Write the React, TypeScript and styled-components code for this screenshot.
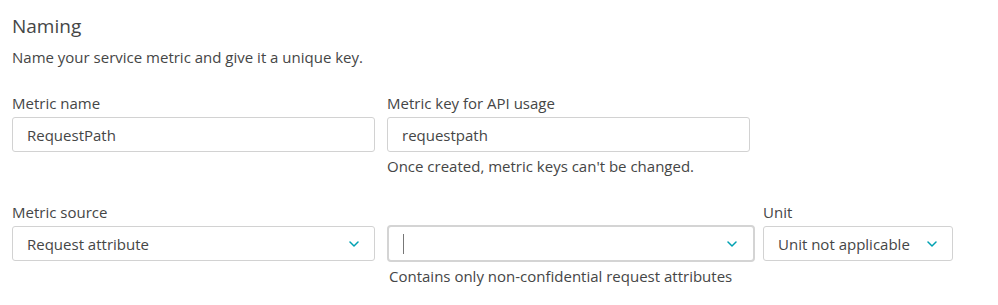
import styled, { createGlobalStyle } from 'styled-components';

const GlobalStyle = createGlobalStyle`
  body {
    margin: 0;
    background: #ffffff;
    font-family: "Open Sans", "Liberation Sans", sans-serif;
    color: #454646;
  }
`;

const Wrapper = styled.div`
  padding: 12px 12px 0 12px;
  box-sizing: border-box;
  width: 998px;
`;

const Title = styled.h2`
  margin: 0;
  font-size: 19px;
  font-weight: 400;
  line-height: 28px;
`;

const Intro = styled.p`
  margin: 7px 0 0 0;
  font-size: 15px;
  line-height: 20px;
`;

const Row = styled.div<{ $top: number }>`
  display: flex;
  align-items: flex-start;
  margin-top: ${({ $top }) => $top}px;
`;

const Field = styled.div<{ $width: number; $gap?: number }>`
  display: flex;
  flex-direction: column;
  width: ${({ $width }) => $width}px;
  margin-right: ${({ $gap }) => $gap ?? 0}px;
`;

const Label = styled.label`
  font-size: 15px;
  line-height: 20px;
  margin-bottom: 4px;
  min-height: 20px;
`;

const TextInput = styled.input`
  box-sizing: border-box;
  width: 100%;
  height: 35px;
  border: 1px solid #d2d2d2;
  border-radius: 3px;
  padding: 0 14px;
  font-family: inherit;
  font-size: 15px;
  color: #454646;
  background: #fff;
  outline: none;
`;

const Select = styled.div<{ $focused?: boolean }>`
  box-sizing: border-box;
  display: flex;
  align-items: center;
  justify-content: space-between;
  height: ${({ $focused }) => ($focused ? 37 : 35)}px;
  margin-top: ${({ $focused }) => ($focused ? -1 : 0)}px;
  border: ${({ $focused }) => ($focused ? '2px solid #d4d4d4' : '1px solid #d2d2d2')};
  border-radius: ${({ $focused }) => ($focused ? 4 : 3)}px;
  padding: 0 ${({ $focused }) => ($focused ? 16 : 15)}px 0 14px;
  font-size: 15px;
  background: #fff;
`;

const Caret = styled.span`
  display: inline-block;
  width: 1px;
  height: 20px;
  background: #777;
`;

const Hint = styled.div<{ $indent?: number }>`
  font-size: 15px;
  line-height: 20px;
  margin-top: 4px;
  padding-left: ${({ $indent }) => $indent ?? 0}px;
`;

const Chevron = () => (
  <svg width="10" height="6" viewBox="0 0 10 6" fill="none">
    <path d="M1 1l4 4 4-4" stroke="#00a1b2" strokeWidth="1.5" strokeLinecap="round" strokeLinejoin="round" />
  </svg>
);

export default function App() {
  return (
    <Wrapper>
      <GlobalStyle />
      <Title>Naming</Title>
      <Intro>Name your service metric and give it a unique key.</Intro>

      <Row $top={26}>
        <Field $width={363} $gap={12}>
          <Label>Metric name</Label>
          <TextInput value="RequestPath" readOnly />
        </Field>
        <Field $width={363}>
          <Label>Metric key for API usage</Label>
          <TextInput value="requestpath" readOnly />
          <Hint>Once created, metric keys can't be changed.</Hint>
        </Field>
      </Row>

      <Row $top={26}>
        <Field $width={363} $gap={12}>
          <Label>Metric source</Label>
          <Select>
            Request attribute
            <Chevron />
          </Select>
        </Field>
        <Field $width={368} $gap={8}>
          <Label>&nbsp;</Label>
          <Select $focused>
            <Caret />
            <Chevron />
          </Select>
          <Hint $indent={2}>Contains only non-confidential request attributes</Hint>
        </Field>
        <Field $width={190}>
          <Label>Unit</Label>
          <Select>
            Unit not applicable
            <Chevron />
          </Select>
        </Field>
      </Row>
    </Wrapper>
  );
}
